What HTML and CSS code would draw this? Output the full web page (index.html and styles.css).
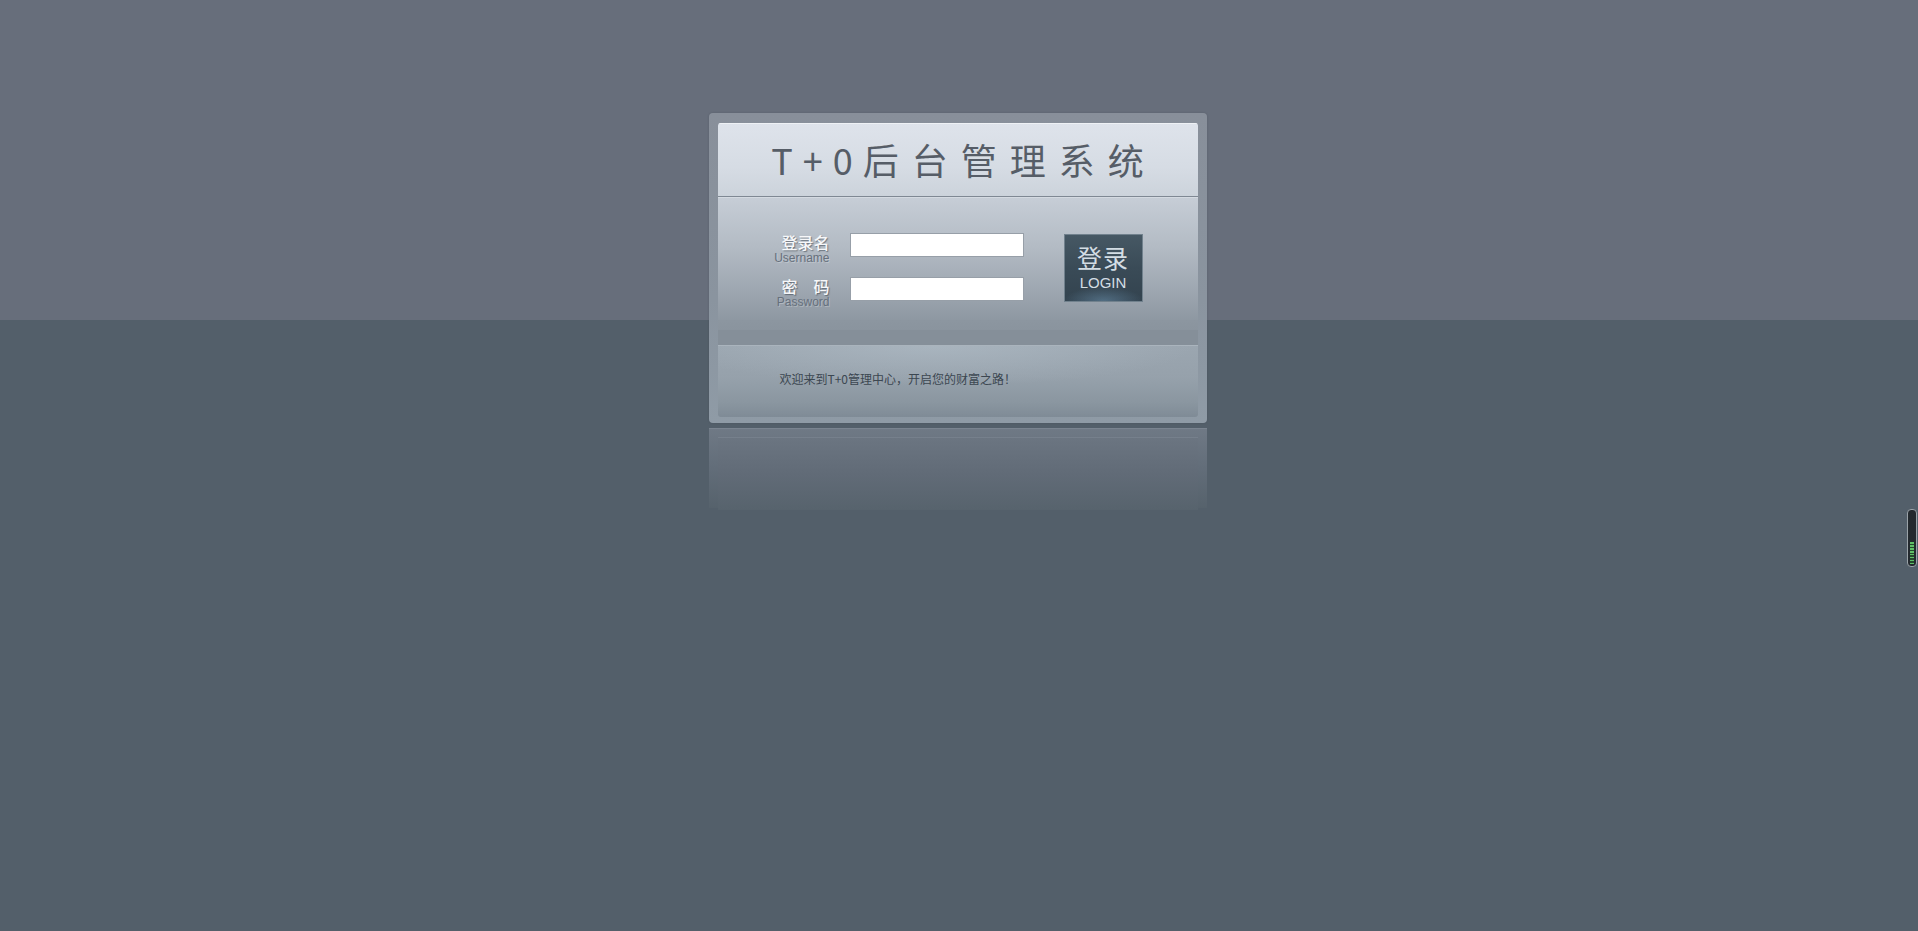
FILE: index.html
```html
<!DOCTYPE html>
<html lang="zh-CN">
<head>
<meta charset="utf-8">
<title>T+0后台管理系统</title>
<link rel="stylesheet" href="styles.css">
</head>
<body>
<div class="page">
  <div class="card">
    <div class="panel">
      <div class="title"><span class="title-en">T+0</span>后台管理系统</div>
      <form class="form">
        <div class="fields">
          <div class="row">
            <div class="label">
              <span class="cn">登录名</span>
              <span class="en">Username</span>
            </div>
            <input class="input" type="text">
          </div>
          <div class="row">
            <div class="label">
              <span class="cn">密　码</span>
              <span class="en">Password</span>
            </div>
            <input class="input" type="password">
          </div>
        </div>
        <button class="login" type="button">
          <span class="login-cn">登录</span>
          <span class="login-en">LOGIN</span>
        </button>
      </form>
      <div class="band"></div>
      <div class="footer">欢迎来到T+0管理中心，开启您的财富之路！</div>
    </div>
  </div>
  <div class="reflection"><div class="reflection-inner"></div></div>
</div>
<div class="meter"><div class="meter-fill"></div></div>
</body>
</html>
```

FILE: styles.css
```css
html, body {
  margin: 0;
  padding: 0;
}
body {
  height: 931px;
  overflow: hidden;
  background: linear-gradient(#676e7b 0, #676e7b 320px, #535f6a 320px, #535f6a 100%);
  font-family: "Liberation Sans", "Noto Sans CJK SC", sans-serif;
}
.page {
  padding-top: 113px;
  padding-right: 3px;
  display: flex;
  flex-direction: column;
  align-items: center;
}
.card {
  width: 498px;
  box-sizing: border-box;
  padding: 10px 9px 6px 9px;
  border-radius: 4px;
  background: linear-gradient(#888f9a, #8a949f 60%, #8f9ba6);
  box-shadow: 0 0 2px rgba(60, 70, 80, 0.4);
}
.panel {
  border-radius: 3px;
  overflow: hidden;
  display: flex;
  flex-direction: column;
}
.title {
  height: 73px;
  border-bottom: 1px solid #7f8893;
  background: linear-gradient(#dee3eb, #d6dce4 60%, #ccd3db);
  color: #565d67;
  font-family: "Noto Sans CJK SC", "Liberation Sans", sans-serif;
  font-size: 36px;
  letter-spacing: 13px;
  line-height: 73px;
  text-align: center;
  padding-left: 13px;
  box-shadow: inset 0 1px 0 #eef1f5;
}
.title-en {
  letter-spacing: 10px;
}
.form {
  margin: 0;
  height: 123px;
  box-sizing: border-box;
  padding: 35px 0 0 38px;
  display: flex;
  align-items: flex-start;
  background: linear-gradient(#c6cdd6, #b3bbc4 40%, #9ea7b1 75%, #8e98a2);
  border-top: 1px solid #d4dae1;
}
.fields {
  display: flex;
  flex-direction: column;
  gap: 13px;
}
.row {
  display: flex;
  align-items: flex-start;
  gap: 20px;
}
.label {
  width: 74px;
  display: flex;
  flex-direction: column;
  align-items: flex-end;
}
.cn {
  font-family: "Noto Sans CJK SC", sans-serif;
  font-size: 16px;
  font-weight: 500;
  line-height: 19px;
  color: #f6f7f9;
  text-shadow: 1px 1px 1px rgba(40, 50, 60, 0.5);
}
.en {
  font-size: 12px;
  line-height: 12px;
  color: #66707c;
  text-shadow: 1px 1px 0 rgba(255, 255, 255, 0.25);
}
.input {
  width: 174px;
  height: 24px;
  box-sizing: border-box;
  margin: 0;
  border: 1px solid #979fa8;
  background: #ffffff;
  outline: none;
}
.login {
  margin: 1px 0 0 40px;
  width: 79px;
  height: 68px;
  box-sizing: border-box;
  padding: 0;
  border: 1px solid #71818d;
  background:
    radial-gradient(ellipse 40px 14px at 50% 100%, rgba(110, 150, 180, 0.5), rgba(110, 150, 180, 0) 100%),
    linear-gradient(#465864, #3a4b57 50%, #33434f);
  display: flex;
  flex-direction: column;
  align-items: center;
  color: #d3dde4;
  cursor: pointer;
}
.login-cn {
  font-family: "Noto Sans CJK SC", sans-serif;
  font-size: 25px;
  line-height: 28px;
  margin-top: 8px;
  letter-spacing: 1px;
}
.login-en {
  font-size: 15px;
  line-height: 17px;
  margin-top: 3px;
}
.band {
  height: 25px;
  background: linear-gradient(#8c96a0 0, #8a949e 10px, #858f99 10px, #858f99 100%);
}
.footer {
  height: 72px;
  box-sizing: border-box;
  padding: 26px 0 0 62px;
  font-family: "Noto Sans CJK SC", sans-serif;
  font-size: 12px;
  line-height: 14px;
  color: #3c4751;
  border-top: 1px solid #aab4bd;
  background:
    radial-gradient(ellipse 260px 40px at 45% 0, rgba(180, 192, 202, 0.55), rgba(180, 192, 202, 0)),
    linear-gradient(#9ba6b0, #96a1ab 45%, #8a96a0 80%, #7f8b96);
}
.reflection {
  margin-top: 5px;
  width: 498px;
  height: 80px;
  box-sizing: border-box;
  padding: 8px 9px 0 9px;
  border-top: 1px solid #7a8490;
  background: linear-gradient(#6f7985, #626d79 50%, #56626c);
}
.reflection-inner {
  height: 72px;
  border-top: 1px solid #76808c;
  background: linear-gradient(#6b7581, #616b77 50%, #57636d);
}
.meter {
  position: absolute;
  left: 1907px;
  top: 509px;
  width: 10px;
  height: 58px;
  box-sizing: border-box;
  border: 1px solid #9aa2a8;
  border-radius: 4px;
  background: #23292e;
  display: flex;
  flex-direction: column;
  justify-content: flex-end;
  padding: 0 2px 2px 2px;
}
.meter-fill {
  height: 22px;
  background: repeating-linear-gradient(#5fbf68 0, #5fbf68 1.5px, #234a2c 1.5px, #234a2c 3px);
}
```
